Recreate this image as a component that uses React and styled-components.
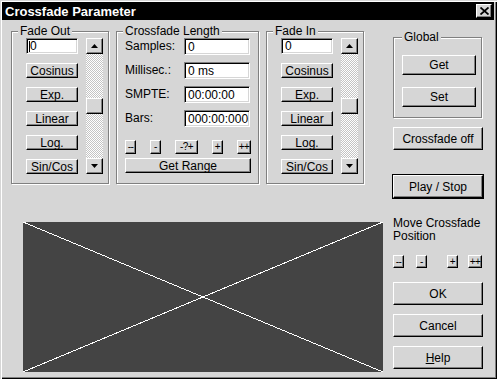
import React from "react"
import styled, { createGlobalStyle } from "styled-components"

const GlobalStyle = createGlobalStyle`
  body {
    margin: 0;
    background: #d6d6d6;
    font-family: "Liberation Sans", Arial, sans-serif;
    font-size: 12px;
  }
`

const App = () => {
  return (
    <>
      <GlobalStyle />
      <Win>
        <TitleBar>
          <span>Crossfade Parameter</span>
          <CloseBtn>
            <svg width="9" height="8" viewBox="0 0 9 8">
              <path d="M0.5 0.5 L8.5 7.5 M8.5 0.5 L0.5 7.5" stroke="#000" strokeWidth="1.8" />
            </svg>
          </CloseBtn>
        </TitleBar>

        <Body>
          <LeftCol>
            <GroupsRow>
              <FadeGroup title="Fade Out" value="0" caret thumb={44} />

              <Group $w={143} $pl={8} $pr={8}>
                <legend>Crossfade Length</legend>
                <LengthGrid>
                  <FieldLabel>Samples:</FieldLabel>
                  <Field $h={17}>0</Field>
                  <FieldLabel>Millisec.:</FieldLabel>
                  <Field $h={17}>0 ms</Field>
                  <FieldLabel>SMPTE:</FieldLabel>
                  <Field $h={17}>00:00:00</Field>
                  <FieldLabel>Bars:</FieldLabel>
                  <Field $h={17}>000:00:000</Field>
                </LengthGrid>
                <StepRow>
                  <Btn $w={11} $h={14} $small>--</Btn>
                  <Btn $w={11} $h={14} $small>-</Btn>
                  <Btn $w={23} $h={14} $small>-?+</Btn>
                  <Btn $w={11} $h={14} $small>+</Btn>
                  <Btn $w={14} $h={14} $small>++</Btn>
                </StepRow>
                <Btn $w={126} $h={15} style={{ marginTop: 4 }}>Get Range</Btn>
              </Group>

              <FadeGroup title="Fade In" value="0" thumb={44} />
            </GroupsRow>

            <Canvas>
              <svg width="360" height="150" viewBox="0 0 360 150" shapeRendering="crispEdges">
                <line x1="0" y1="0" x2="360" y2="150" stroke="#fff" strokeWidth="1" />
                <line x1="0" y1="150" x2="360" y2="0" stroke="#fff" strokeWidth="1" />
              </svg>
            </Canvas>
          </LeftCol>

          <RightCol>
            <GlobalGroup>
              <legend>Global</legend>
              <Btn $w={74} $h={20}>Get</Btn>
              <Btn $w={74} $h={20}>Set</Btn>
            </GlobalGroup>

            <Btn $w={90} $h={23} style={{ marginTop: 9 }}>Crossfade off</Btn>
            <Btn $w={90} $h={23} $default style={{ marginTop: 25 }}>Play / Stop</Btn>

            <MoveLabel>Move Crossfade<br />Position</MoveLabel>
            <MoveRow>
              <Btn $w={11} $h={13} $small>--</Btn>
              <Btn $w={11} $h={13} $small style={{ marginLeft: 12 }}>-</Btn>
              <Btn $w={11} $h={13} $small style={{ marginLeft: 20 }}>+</Btn>
              <Btn $w={14} $h={13} $small style={{ marginLeft: 10 }}>++</Btn>
            </MoveRow>

            <Btn $w={90} $h={23} style={{ marginTop: 14 }}>OK</Btn>
            <Btn $w={90} $h={23} style={{ marginTop: 9 }}>Cancel</Btn>
            <Btn $w={90} $h={23} style={{ marginTop: 9 }}><u>H</u>elp</Btn>
          </RightCol>
        </Body>
      </Win>
    </>
  )
}

export default App

const FadeGroup = ({ title, value, caret, thumb }) => (
  <Group $w={98} $pl={14} $pr={5}>
    <legend>{title}</legend>
    <FadeInner>
      <FadeCol>
        <Field $h={16}>
          {caret && <Caret />}
          {value}
        </Field>
        <Btn $w={52} $h={15}>Cosinus</Btn>
        <Btn $w={52} $h={15}>Exp.</Btn>
        <Btn $w={52} $h={15}>Linear</Btn>
        <Btn $w={52} $h={15}>Log.</Btn>
        <Btn $w={52} $h={15}>Sin/Cos</Btn>
      </FadeCol>
      <VScroll>
        <ScrollBtn>
          <svg width="7" height="4" viewBox="0 0 7 4"><polygon points="3.5,0 7,4 0,4" fill="#000" /></svg>
        </ScrollBtn>
        <Track>
          <Thumb style={{ marginTop: thumb }} />
        </Track>
        <ScrollBtn>
          <svg width="7" height="4" viewBox="0 0 7 4"><polygon points="0,0 7,0 3.5,4" fill="#000" /></svg>
        </ScrollBtn>
      </VScroll>
    </FadeInner>
  </Group>
)

/************ WINDOW ************/
const Win = styled.div`
  width: 497px;
  height: 379px;
  box-sizing: border-box;
  background: #d6d6d6;
  padding: 2px 3px 3px 2px;
  box-shadow: inset 1px 1px #d6d6d6, inset 2px 2px #fff, inset -1px -1px #000, inset -2px -2px #808080;
  display: flex;
  flex-direction: column;
  overflow: hidden;
`

const TitleBar = styled.div`
  height: 18px;
  background: #000;
  color: #fff;
  font-weight: bold;
  font-size: 13px;
  display: flex;
  align-items: center;
  justify-content: space-between;
  padding: 0 2px 0 3px;
`

const CloseBtn = styled.div`
  width: 16px;
  height: 14px;
  box-sizing: border-box;
  background: #d6d6d6;
  border: 1px solid;
  border-color: #fff #000 #000 #fff;
  box-shadow: inset -1px -1px #808080;
  display: flex;
  align-items: center;
  justify-content: center;
`

const Body = styled.div`
  display: flex;
  gap: 10px;
  padding: 5px 0 0 9px;
  color: #000;
`

const LeftCol = styled.div`
  width: 372px;
  display: flex;
  flex-direction: column;
`

const GroupsRow = styled.div`
  display: flex;
  gap: 7px;
`

/************ GROUP BOX ************/
const Group = styled.fieldset`
  margin: 0;
  width: ${(p) => p.$w}px;
  height: 159px;
  box-sizing: border-box;
  padding: 0 ${(p) => p.$pr}px 0 ${(p) => p.$pl}px;
  border: 1px solid #808080;
  box-shadow: inset 1px 1px #fff, 1px 1px #fff;
  min-width: 0;

  legend {
    margin-left: ${(p) => 6 - p.$pl}px;
    padding: 0 2px;
    line-height: 13px;
    font-size: 12px;
    background: #d6d6d6;
  }
`

const FadeInner = styled.div`
  display: flex;
  gap: 8px;
`

const FadeCol = styled.div`
  width: 52px;
  display: flex;
  flex-direction: column;
  gap: 9px;
`

const VScroll = styled.div`
  width: 17px;
  height: 136px;
  display: flex;
  flex-direction: column;
`

const ScrollBtn = styled.div`
  width: 17px;
  height: 16px;
  box-sizing: border-box;
  background: #d6d6d6;
  border: 1px solid;
  border-color: #fff #000 #000 #fff;
  box-shadow: inset -1px -1px #808080;
  display: flex;
  align-items: center;
  justify-content: center;
`

const Track = styled.div`
  flex: 1;
  background: repeating-conic-gradient(#fff 0 25%, #c4c4c4 0 50%) 0 0 / 2px 2px;
`

const Thumb = styled(ScrollBtn)``

const Field = styled.div`
  height: ${(p) => p.$h}px;
  box-sizing: border-box;
  background: #fff;
  border: 1px solid;
  border-color: #808080 #fff #fff #808080;
  box-shadow: inset 1px 1px #000, inset -1px -1px #d6d6d6;
  padding: 0 3px;
  display: flex;
  align-items: center;
  font-size: 12px;
  line-height: 1;
`

const Caret = styled.span`
  display: inline-block;
  width: 1px;
  height: 11px;
  background: #000;
  margin-left: -1px;
`

const Btn = styled.div`
  width: ${(p) => p.$w}px;
  height: ${(p) => p.$h}px;
  box-sizing: border-box;
  background: #d6d6d6;
  border: 1px solid;
  border-color: #fff #000 #000 #fff;
  box-shadow: inset -1px -1px #808080;
  outline: ${(p) => (p.$default ? "1px solid #000" : "none")};
  display: flex;
  align-items: center;
  justify-content: center;
  font-size: ${(p) => (p.$small ? 10 : 12)}px;
  letter-spacing: ${(p) => (p.$small ? "-0.5px" : "0")};
  line-height: 1;
  white-space: nowrap;
  overflow: hidden;
  flex-shrink: 0;
`

/************ CROSSFADE LENGTH ************/
const LengthGrid = styled.div`
  display: grid;
  grid-template-columns: 1fr 66px;
  row-gap: 7px;
  align-items: center;
`

const FieldLabel = styled.span`
  font-size: 12px;
  line-height: 17px;
`

const StepRow = styled.div`
  margin-top: 13px;
  width: 126px;
  display: flex;
  justify-content: space-between;
`

const Canvas = styled.div`
  margin: 38px 0 0 12px;
  width: 360px;
  height: 150px;
  background: #444;
  line-height: 0;
`

/************ RIGHT COLUMN ************/
const RightCol = styled.div`
  width: 90px;
  display: flex;
  flex-direction: column;
`

const GlobalGroup = styled.fieldset`
  margin: 6px 0 0 0;
  width: 89px;
  height: 87px;
  box-sizing: border-box;
  padding: 11px 0 0 8px;
  border: 1px solid #808080;
  box-shadow: inset 1px 1px #fff, 1px 1px #fff;
  display: flex;
  flex-direction: column;
  gap: 12px;
  min-width: 0;

  legend {
    margin-left: 0;
    padding: 0 2px;
    line-height: 13px;
    font-size: 12px;
    background: #d6d6d6;
  }
`

const MoveLabel = styled.div`
  margin-top: 19px;
  font-size: 12px;
  line-height: 13px;
`

const MoveRow = styled.div`
  margin-top: 12px;
  display: flex;
`
